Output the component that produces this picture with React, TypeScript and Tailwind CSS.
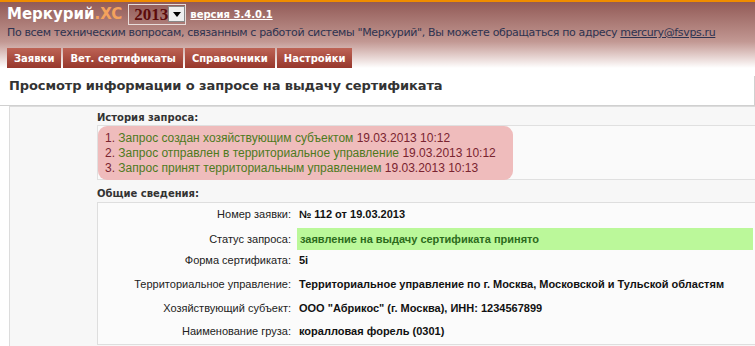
const verdana = { fontFamily: '"DejaVu Sans", Verdana, sans-serif' };
const arial = { fontFamily: '"Liberation Sans", Arial, sans-serif' };

const rows = [
  { label: "Номер заявки:", value: "№ 112 от 19.03.2013", h: "h-[22px]" },
  { label: "Статус запроса:", value: "заявление на выдачу сертификата принято", h: "h-[22px] mt-[3px]", status: true },
  { label: "Форма сертификата:", value: "5i", h: "h-[21px]" },
  { label: "Территориальное управление:", value: "Территориальное управление по г. Москва, Московской и Тульской областям", h: "h-[27px]" },
  { label: "Хозяйствующий субъект:", value: 'ООО "Абрикос" (г. Москва), ИНН: 1234567899', h: "h-[20px]" },
  { label: "Наименование груза:", value: "коралловая форель (0301)", h: "h-[26px]" },
];

const history = [
  { text: "Запрос создан хозяйствующим субъектом", date: "19.03.2013 10:12" },
  { text: "Запрос отправлен в территориальное управление", date: "19.03.2013 10:12" },
  { text: "Запрос принят территориальным управлением", date: "19.03.2013 10:13" },
];

const tabs = ["Заявки", "Вет. сертификаты", "Справочники", "Настройки"];

export default function App() {
  return (
    <div className="w-[755px] h-[346px] overflow-hidden bg-white">
      {/* header */}
      <div className="border-t-2 border-[#f08c00] bg-gradient-to-b from-[#925b57] via-[#c29893] via-60% to-white" style={verdana}>
        <div className="flex items-center h-[22px] pl-[7px] mt-[1px]">
          <span className="text-[15px] font-bold text-white">Меркурий</span>
          <span className="text-[15px] font-bold text-[#f4a25c]">.XC</span>
          <div className="ml-[6px] w-[58px] h-[21px] border border-[#e8dcda] flex items-center justify-between pl-[5px] pr-[1px] overflow-hidden">
            <span className="text-[17px] font-bold text-[#5c0c0c] leading-none" style={{ fontFamily: '"Liberation Serif", serif' }}>2013</span>
            <span className="w-[17px] h-[16px] shrink-0 bg-[#eeeeee] border border-[#888] flex items-center justify-center">
              <svg width="8" height="5" viewBox="0 0 8 5"><path d="M0 0h8L4 5z" fill="#000" /></svg>
            </span>
          </div>
          <a className="ml-[4px] text-[10px] font-bold text-white underline">версия 3.4.0.1</a>
        </div>
        <div className="pl-[7px] h-[16px] text-[11px] text-[#2e3350] leading-[16px] tracking-[-0.35px] whitespace-nowrap">
          По всем техническим вопросам, связанным с работой системы "Меркурий", Вы можете обращаться по адресу{" "}
          <a className="underline">mercury@fsvps.ru</a>
        </div>
        <div className="flex gap-[2px] pl-[7px] mt-[7px]">
          {tabs.map((t) => (
            <div key={t} className="h-[20px] px-[7px] flex items-center bg-gradient-to-b from-[#bd6355] to-[#97372c] text-white text-[10px] font-bold">
              {t}
            </div>
          ))}
        </div>
      </div>

      {/* heading */}
      <div className="h-[30px] mt-[8px] pl-[9px] pt-[2px] border-r border-b border-[#d0d0d0]" style={verdana}>
        <h1 className="text-[13px] leading-[16px] font-bold text-[#333] tracking-[-0.1px]">
          Просмотр информации о запросе на выдачу сертификата
        </h1>
      </div>

      {/* content */}
      <div className="ml-[9px] border-l border-t border-[#dcdcdc] bg-[#f7f7f7] pl-[87px] pt-[4px] h-[300px]">
        <div className="text-[10px] font-bold text-[#333] leading-[14px]" style={verdana}>История запроса:</div>
        <div className="border-l border-t border-b border-[#e0e0e0] bg-[#fafafa] h-[55px]">
          <ol className="w-[415px] h-[54px] rounded-[9px] bg-[#efbcbc] pl-[7px] pt-[5px] text-[12px] leading-[15px]" style={arial}>
            {history.map((h, i) => (
              <li key={i} className="text-[#7a2430] whitespace-nowrap">
                {i + 1}. <span className="text-[#4d7a1c]">{h.text}</span> {h.date}
              </li>
            ))}
          </ol>
        </div>
        <div className="mt-[7px] text-[10px] font-bold text-[#333] leading-[14px]" style={verdana}>Общие сведения:</div>
        <div className="mt-[1px] border-l border-t border-b border-[#dedede] bg-[#fbfbfb]" style={arial}>
          {rows.map((r, i) => (
            <div key={i} className={`flex items-center ${r.h}`}>
              <div className="w-[199px] text-right pr-[6px] text-[11px] text-[#222] shrink-0 whitespace-nowrap">{r.label}</div>
              <div
                className={`flex-1 h-full flex items-center text-[11px] font-bold whitespace-nowrap ${
                  r.status ? "bg-[#bbf89a] text-[#2c6b1c] pl-[3px] mr-[2px]" : "text-[#111] pl-[2px]"
                }`}
              >
                {r.value}
              </div>
            </div>
          ))}
        </div>
      </div>
    </div>
  );
}
